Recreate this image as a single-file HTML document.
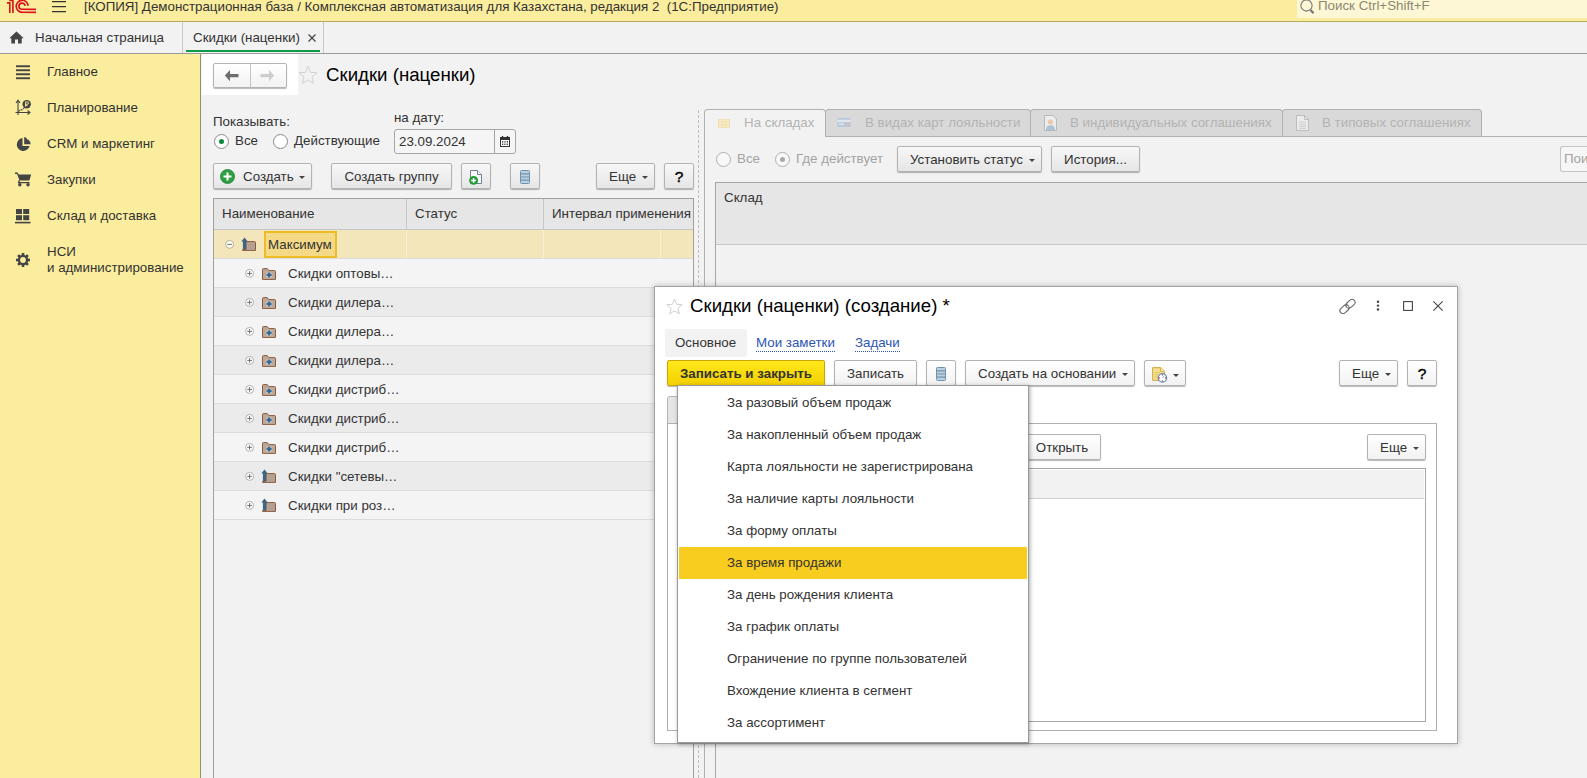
<!DOCTYPE html>
<html lang="ru">
<head>
<meta charset="utf-8">
<title>Скидки (наценки)</title>
<style>
*{box-sizing:border-box;margin:0;padding:0}
html,body{width:1587px;height:778px;overflow:hidden;background:#f2f2f2;font-family:"Liberation Sans",sans-serif;font-size:13.33px;color:#333}
.abs{position:absolute}
#top{left:0;top:0;width:1587px;height:22px;background:#fbed9e;border-bottom:1px solid #b9a85f}
#top .ttl{left:84px;top:-3px;font-size:13.33px;line-height:20px;color:#333;white-space:nowrap}
#srch{left:1297px;top:0;width:290px;height:18px;background:#fef7d6}
#srch span{left:21px;top:-4px;font-size:13.33px;line-height:20px;color:#8c8872;white-space:nowrap}
#tabs{left:0;top:22px;width:1587px;height:32px;background:#f2f2f2;border-bottom:1px solid #9a9a9a}
#tabs .t{top:0;height:31px;line-height:31px;font-size:13.33px;color:#333;white-space:nowrap}
#side{left:0;top:54px;width:201px;height:724px;background:#fbed9e;border-right:1px solid #979060}
#side .it{left:47px;font-size:13.33px;line-height:16px;color:#333;white-space:nowrap}
.btn{position:absolute;height:26px;border:1px solid #b3b3b3;border-radius:2px;background:linear-gradient(rgba(255,255,255,.4),rgba(0,0,0,.05));box-shadow:0 1px 1px rgba(0,0,0,.28);font-size:13.33px;line-height:26px;color:#333;text-align:center;white-space:nowrap}
.car{position:absolute;right:6px;top:12px;width:0;height:0;border-left:3px solid transparent;border-right:3px solid transparent;border-top:3px solid #444}
.btn.dd{text-align:left;padding-left:12px}
.radio{position:absolute;width:15px;height:15px;border:1px solid #8a8a8a;border-radius:50%;background:#fff}
.radio.on::after{content:"";position:absolute;left:4px;top:4px;width:5px;height:5px;border-radius:50%;background:#0b8a3c}
.lbl{position:absolute;font-size:13.33px;line-height:16px;white-space:nowrap;color:#333}

.th{position:absolute;top:0;height:30px;line-height:29px;padding-left:8px;font-size:13.33px;color:#333;border-right:1px solid #c6c6c6;white-space:nowrap;overflow:hidden}
.row{position:absolute;left:0;width:479px;height:29px;border-bottom:1px solid #dcdcdc}
.row .nm{position:absolute;left:74px;top:0;line-height:30px;font-size:13.33px;color:#333;white-space:nowrap}
.row .pm{position:absolute;left:31px;top:9px}
.row .fi{position:absolute;left:48px;top:9px}

.rt{position:absolute;top:55px;height:27px;border:1px solid #b0b0b0;border-bottom:none;border-radius:4px 4px 0 0;background:#d9d9d9;font-size:13.33px;line-height:26px;color:#b3b3b3;white-space:nowrap}
.rt span{position:absolute;top:0}
.rt svg{position:absolute}

#dlg{left:654px;top:286px;width:804px;height:458px;background:#fff;border:1px solid #a3a3a3;box-shadow:0 0 6px rgba(0,0,0,.25)}
#menu{left:677px;top:385px;width:352px;height:358px;background:#fff;border:1px solid #9a9a9a;box-shadow:1px 1px 4px rgba(0,0,0,.35)}
#menu div{position:absolute;left:1px;width:348px;height:32px;padding-left:48px;font-size:13.33px;line-height:32px;color:#333;white-space:nowrap}
a.lk{position:absolute;color:#2d55b3;font-size:13.33px;line-height:16px;white-space:nowrap;border-bottom:1px dotted #2d55b3;text-decoration:none}
</style>
</head>
<body>
<!-- TOP BAR -->
<div id="top" class="abs">
  <svg class="abs" style="left:0;top:0" width="40" height="15" viewBox="0 0 40 15">
    <g fill="none" stroke="#d9141c" stroke-width="1.65">
      <path d="M7 2.9H9.8V12.9"/>
      <path d="M9.3 0.4H12.9V12.9"/>
      <path d="M28.2 5.9A6 6 0 1 0 22.3 12.3H36"/>
      <path d="M25.1 5.9A3.1 3.1 0 1 0 22 9.3H36"/>
    </g>
  </svg>
  <svg class="abs" style="left:52px;top:0" width="14" height="13" viewBox="0 0 14 13"><g stroke="#333" stroke-width="1.3"><path d="M0 1.7H14M0 6.7H14M0 11.7H14"/></g></svg>
  <div class="abs ttl">[КОПИЯ] Демонстрационная база / Комплексная автоматизация для Казахстана, редакция 2&nbsp; (1С:Предприятие)</div>
  <div id="srch" class="abs">
    <svg class="abs" style="left:2px;top:-1px" width="17" height="16" viewBox="0 0 17 16"><circle cx="7.5" cy="6.5" r="5.6" fill="none" stroke="#777" stroke-width="1.1"/><path d="M11.5 11L14.5 14.3" stroke="#777" stroke-width="2.2"/></svg>
    <span class="abs">Поиск Ctrl+Shift+F</span>
  </div>
</div>

<!-- TAB BAR -->
<div id="tabs" class="abs">
  <svg class="abs" style="left:9px;top:9px" width="15" height="13" viewBox="0 0 15 13"><path d="M7.5 0.5L0.3 7.2H2.3V12.6H6V8.4H9V12.6H12.7V7.2H14.7Z" fill="#444"/></svg>
  <div class="abs t" style="left:35px">Начальная страница</div>
  <div class="abs" style="left:182px;top:0;width:1px;height:31px;background:#c8c8c8"></div>
  <div class="abs t" style="left:193px">Скидки (наценки)</div>
  <svg class="abs" style="left:307px;top:11px" width="10" height="10" viewBox="0 0 10 10"><path d="M1.5 1.5L8.5 8.5M8.5 1.5L1.5 8.5" stroke="#444" stroke-width="1.2"/></svg>
  <div class="abs" style="left:186px;top:28px;width:134px;height:2px;background:#0f9a4a"></div>
  <div class="abs" style="left:323px;top:0;width:1px;height:31px;background:#c8c8c8"></div>
</div>

<!-- SIDEBAR -->
<div id="side" class="abs">
  <svg class="abs" style="left:16px;top:11px" width="14" height="15" viewBox="0 0 14 15"><g fill="#444"><rect y="0.3" width="14" height="1.9"/><rect y="4.3" width="14" height="1.9"/><rect y="8.3" width="14" height="1.9"/><rect y="12.3" width="14" height="1.9"/></g></svg>
  <svg class="abs" style="left:15px;top:45px" width="17" height="18" viewBox="0 0 17 18"><g fill="none" stroke="#444" stroke-width="1.1"><path d="M3 1.5V16M0.5 13.5H14.5"/><path d="M1 4L3 1.2L5 4M12.5 11.5L15 13.5L12.5 15.5" /><path d="M3.5 12.5L5.5 10.5L7 11L9 9" stroke-dasharray="2 1"/></g><circle cx="11.7" cy="5.2" r="4.2" fill="#444"/><path d="M10.6 7.6V2.9H12.3A1.2 1.2 0 0 1 12.3 5.3H10M10 6.4H12.6" stroke="#fbed9e" stroke-width="0.9" fill="none"/></svg>
  <svg class="abs" style="left:16px;top:83px" width="15" height="15" viewBox="0 0 15 15"><path d="M6.5 1A6.5 6.5 0 1 0 13.6 9H6.5Z" fill="#444"/><path d="M8.2 0V7.2H14.6A7 7 0 0 0 12.2 2.6H10.8V1.2A7 7 0 0 0 8.2 0Z" fill="#444"/></svg>
  <svg class="abs" style="left:15px;top:118px" width="17" height="15" viewBox="0 0 17 15"><path d="M0 0.6H2.6L3.6 2.5H16.2L14.4 8.6H4.6L2 1.9H0Z" fill="#444"/><path d="M4.4 8.2L3.6 10.6H14.6" stroke="#444" stroke-width="1.3" fill="none"/><circle cx="4.8" cy="12.8" r="1.7" fill="#444"/><circle cx="13" cy="12.8" r="1.7" fill="#444"/></svg>
  <svg class="abs" style="left:15px;top:155px" width="16" height="15" viewBox="0 0 16 15"><g fill="#444"><rect x="1" y="0" width="6" height="5"/><rect x="8.2" y="0" width="6" height="5"/><rect x="1" y="6.2" width="6" height="5"/><rect x="8.2" y="6.2" width="6" height="5"/><rect x="0" y="12.8" width="15.5" height="1.6"/></g></svg>
  <svg class="abs" style="left:16px;top:199px" width="14" height="14" viewBox="0 0 14 14"><g transform="translate(7 7)"><circle r="4.1" fill="none" stroke="#444" stroke-width="2.4"/><g fill="#444"><rect x="-1.3" y="-7" width="2.6" height="3"/><rect x="-1.3" y="4" width="2.6" height="3"/><rect x="-7" y="-1.3" width="3" height="2.6"/><rect x="4" y="-1.3" width="3" height="2.6"/><g transform="rotate(45)"><rect x="-1.3" y="-7" width="2.6" height="3"/><rect x="-1.3" y="4" width="2.6" height="3"/><rect x="-7" y="-1.3" width="3" height="2.6"/><rect x="4" y="-1.3" width="3" height="2.6"/></g></g></g></svg>
  <div class="abs it" style="top:10px">Главное</div>
  <div class="abs it" style="top:46px">Планирование</div>
  <div class="abs it" style="top:82px">CRM и маркетинг</div>
  <div class="abs it" style="top:118px">Закупки</div>
  <div class="abs it" style="top:154px">Склад и доставка</div>
  <div class="abs it" style="top:190px">НСИ<br>и администрирование</div>
</div>

<!-- MAIN LEFT PANEL -->
<div id="main" class="abs" style="left:201px;top:54px;width:1386px;height:724px">

  <!-- white nav backing -->
  <div class="abs" style="left:1px;top:0;width:96px;height:41px;background:#fff"></div>
  <div class="btn" style="left:12px;top:9px;width:74px;height:25px"></div>
  <div class="abs" style="left:49px;top:10px;width:1px;height:23px;background:#c4c4c4"></div>
  <svg class="abs" style="left:23px;top:15px" width="15" height="13" viewBox="0 0 15 13"><path d="M6 1L0.8 6.6L6 12.2V8.2H14.5V5H6Z" fill="#6e6e6e"/></svg>
  <svg class="abs" style="left:59px;top:15px" width="15" height="13" viewBox="0 0 15 13"><path d="M9 1L14.2 6.6L9 12.2V8.2H0.5V5H9Z" fill="#cdcdcd"/></svg>
  <svg class="abs" style="left:97px;top:11px" width="20" height="20" viewBox="0 0 20 20"><path d="M10 1.2L12.5 7.4L19 7.8L14 12L15.7 18.5L10 14.9L4.3 18.5L6 12L1 7.8L7.5 7.4Z" fill="none" stroke="#d2d2d2" stroke-width="1"/></svg>
  <div class="abs" style="left:125px;top:9px;font-size:18.67px;line-height:24px;color:#000;white-space:nowrap">Скидки (наценки)</div>

  <div class="lbl" style="left:12px;top:60px">Показывать:</div>
  <div class="lbl" style="left:193px;top:56px">на дату:</div>
  <div class="radio on" style="left:13px;top:80px"></div>
  <div class="lbl" style="left:34px;top:79px">Все</div>
  <div class="radio" style="left:72px;top:80px"></div>
  <div class="lbl" style="left:93px;top:79px">Действующие</div>
  <div class="abs" style="left:193px;top:75px;width:122px;height:25px;border:1px solid #a6a6a6;border-radius:3px;background:#f5f5f5"></div>
  <div class="abs" style="left:293px;top:76px;width:1px;height:23px;background:#a6a6a6"></div>
  <div class="lbl" style="left:198px;top:80px">23.09.2024</div>
  <svg class="abs" style="left:299px;top:82px" width="10" height="11" viewBox="0 0 10 11"><rect x="0.5" y="1.5" width="9" height="9" fill="#fff" stroke="#333" stroke-width="1"/><rect x="0" y="1" width="10" height="3" fill="#333"/><rect x="1.8" y="0" width="1.4" height="2" fill="#333"/><rect x="6.8" y="0" width="1.4" height="2" fill="#333"/><g fill="#333"><rect x="2" y="5.2" width="1.3" height="1.3"/><rect x="4.35" y="5.2" width="1.3" height="1.3"/><rect x="6.7" y="5.2" width="1.3" height="1.3"/><rect x="2" y="7.6" width="1.3" height="1.3"/><rect x="4.35" y="7.6" width="1.3" height="1.3"/><rect x="6.7" y="7.6" width="1.3" height="1.3"/></g></svg>

  <div class="btn dd" style="left:12px;top:109px;width:99px;padding-left:29px">Создать<span class="car"></span></div>
  <svg class="abs" style="left:19px;top:115px" width="15" height="15" viewBox="0 0 15 15"><circle cx="7.5" cy="7.5" r="7" fill="#2ea043" stroke="#1c7c31" stroke-width="0.8"/><path d="M3.5 7.5H11.5M7.5 3.5V11.5" stroke="#fff" stroke-width="2"/></svg>
  <div class="btn" style="left:130px;top:109px;width:121px">Создать группу</div>
  <div class="btn" style="left:260px;top:109px;width:30px"></div>
  <svg class="abs" style="left:268px;top:116px" width="14" height="15" viewBox="0 0 14 15"><path d="M1.5 0.5H8.5L12.5 4.5V13.5H1.5Z" fill="#f7f7f7" stroke="#70819b" stroke-width="1"/><path d="M8.5 0.5V4.5H12.5" fill="#fff" stroke="#70819b" stroke-width="1"/><circle cx="4.6" cy="10.4" r="4.4" fill="#219a33"/><path d="M2.1 10.4H7.1M4.6 7.9V12.9" stroke="#fff" stroke-width="1.5"/></svg>
  <div class="btn" style="left:309px;top:109px;width:30px"></div>
  <svg class="abs" style="left:319px;top:116px" width="10" height="14" viewBox="0 0 10 14"><rect x="0.5" y="0.5" width="9" height="13" rx="1" fill="#bdd0de" stroke="#7092b0" stroke-width="1"/><path d="M1 3.8H9M1 7H9M1 10.2H9" stroke="#7092b0" stroke-width="1.2"/></svg>
  <div class="btn dd" style="left:395px;top:109px;width:59px">Еще<span class="car"></span></div>
  <div class="btn" style="left:463px;top:109px;width:30px;color:#000;font-size:15.5px;-webkit-text-stroke:0.4px #000">?</div>

  <!-- table -->
  <div class="abs" style="left:12px;top:144px;width:481px;height:580px;border:1px solid #a0a0a0;border-bottom:none;background:#f2f2f2;overflow:hidden">
    <div class="abs" style="left:0;top:0;width:479px;height:31px;background:#e6e6e6;border-bottom:1px solid #c6c6c6">
      <div class="th" style="left:0;width:193px">Наименование</div>
      <div class="th" style="left:193px;width:137px">Статус</div>
      <div class="th" style="left:330px;width:149px;border-right:none">Интервал применения</div>
    </div>
    <div class="row" style="top:31px;background:#f3e6ba">
      <div class="abs" style="left:192px;top:0;width:1px;height:28px;background:#f7efd6"></div>
      <div class="abs" style="left:329px;top:0;width:1px;height:28px;background:#f7efd6"></div>
      <div class="abs" style="left:446px;top:0;width:1px;height:28px;background:#f7efd6"></div>
      <svg class="pm" style="left:11px;top:9px" width="10" height="10" viewBox="0 0 10 10"><circle cx="4.6" cy="5.4" r="4" fill="#fbf8ec" stroke="#b3ad99" stroke-width="0.9"/><path d="M2.3 5.4H6.9" stroke="#666" stroke-width="0.9"/></svg>
      <svg class="fi" style="left:27px;top:7px" width="15" height="14" viewBox="0 0 15 14"><path d="M5 4.6H13.6Q14.5 4.6 14.5 5.5V13.4H1.6V12.4H5Z" fill="#b9a594" stroke="#8b5a3c" stroke-width="1"/><rect x="6.6" y="6.2" width="7" height="6.4" fill="#b3a090"/><path d="M0.3 4.4L3.5 0.4L6.7 4.4H5.2V12.2H1.9V4.4Z" fill="#3d6685"/></svg>
      <div class="abs" style="left:50px;top:1px;width:73px;height:27px;background:#f4da86;border:2px solid #ecbd26"></div>
      <div class="nm" style="left:54px">Максимум</div>
    </div>
<div class="row" style="top:60px;background:#f4f4f4"><svg class="pm" width="10" height="10" viewBox="0 0 10 10"><circle cx="4.6" cy="5.4" r="4" fill="#fdfdfd" stroke="#a9a9a9" stroke-width="0.9"/><path d="M2.2 5.4H7M4.6 3V7.8" stroke="#666" stroke-width="0.9"/></svg><svg class="fi" width="15" height="13" viewBox="0 0 15 13"><path d="M0.5 1.5Q0.5 0.6 1.4 0.6H5.2L7 2.6H12.6Q13.5 2.6 13.5 3.5V11.4H0.5Z" fill="#bba796" stroke="#8b5a3c" stroke-width="1"/><rect x="1" y="3.6" width="12" height="7.3" fill="#bda998"/><circle cx="7.1" cy="6.9" r="3.1" fill="#d9cdc2" opacity=".75"/><path d="M7.1 4.4V9.4M4.6 6.9H9.6" stroke="#33689a" stroke-width="2.1"/></svg><div class="nm">Скидки оптовы…</div></div>
<div class="row" style="top:89px;background:#ebebeb"><svg class="pm" width="10" height="10" viewBox="0 0 10 10"><circle cx="4.6" cy="5.4" r="4" fill="#fdfdfd" stroke="#a9a9a9" stroke-width="0.9"/><path d="M2.2 5.4H7M4.6 3V7.8" stroke="#666" stroke-width="0.9"/></svg><svg class="fi" width="15" height="13" viewBox="0 0 15 13"><path d="M0.5 1.5Q0.5 0.6 1.4 0.6H5.2L7 2.6H12.6Q13.5 2.6 13.5 3.5V11.4H0.5Z" fill="#bba796" stroke="#8b5a3c" stroke-width="1"/><rect x="1" y="3.6" width="12" height="7.3" fill="#bda998"/><circle cx="7.1" cy="6.9" r="3.1" fill="#d9cdc2" opacity=".75"/><path d="M7.1 4.4V9.4M4.6 6.9H9.6" stroke="#33689a" stroke-width="2.1"/></svg><div class="nm">Скидки дилера…</div></div>
<div class="row" style="top:118px;background:#f4f4f4"><svg class="pm" width="10" height="10" viewBox="0 0 10 10"><circle cx="4.6" cy="5.4" r="4" fill="#fdfdfd" stroke="#a9a9a9" stroke-width="0.9"/><path d="M2.2 5.4H7M4.6 3V7.8" stroke="#666" stroke-width="0.9"/></svg><svg class="fi" width="15" height="13" viewBox="0 0 15 13"><path d="M0.5 1.5Q0.5 0.6 1.4 0.6H5.2L7 2.6H12.6Q13.5 2.6 13.5 3.5V11.4H0.5Z" fill="#bba796" stroke="#8b5a3c" stroke-width="1"/><rect x="1" y="3.6" width="12" height="7.3" fill="#bda998"/><circle cx="7.1" cy="6.9" r="3.1" fill="#d9cdc2" opacity=".75"/><path d="M7.1 4.4V9.4M4.6 6.9H9.6" stroke="#33689a" stroke-width="2.1"/></svg><div class="nm">Скидки дилера…</div></div>
<div class="row" style="top:147px;background:#ebebeb"><svg class="pm" width="10" height="10" viewBox="0 0 10 10"><circle cx="4.6" cy="5.4" r="4" fill="#fdfdfd" stroke="#a9a9a9" stroke-width="0.9"/><path d="M2.2 5.4H7M4.6 3V7.8" stroke="#666" stroke-width="0.9"/></svg><svg class="fi" width="15" height="13" viewBox="0 0 15 13"><path d="M0.5 1.5Q0.5 0.6 1.4 0.6H5.2L7 2.6H12.6Q13.5 2.6 13.5 3.5V11.4H0.5Z" fill="#bba796" stroke="#8b5a3c" stroke-width="1"/><rect x="1" y="3.6" width="12" height="7.3" fill="#bda998"/><circle cx="7.1" cy="6.9" r="3.1" fill="#d9cdc2" opacity=".75"/><path d="M7.1 4.4V9.4M4.6 6.9H9.6" stroke="#33689a" stroke-width="2.1"/></svg><div class="nm">Скидки дилера…</div></div>
<div class="row" style="top:176px;background:#f4f4f4"><svg class="pm" width="10" height="10" viewBox="0 0 10 10"><circle cx="4.6" cy="5.4" r="4" fill="#fdfdfd" stroke="#a9a9a9" stroke-width="0.9"/><path d="M2.2 5.4H7M4.6 3V7.8" stroke="#666" stroke-width="0.9"/></svg><svg class="fi" width="15" height="13" viewBox="0 0 15 13"><path d="M0.5 1.5Q0.5 0.6 1.4 0.6H5.2L7 2.6H12.6Q13.5 2.6 13.5 3.5V11.4H0.5Z" fill="#bba796" stroke="#8b5a3c" stroke-width="1"/><rect x="1" y="3.6" width="12" height="7.3" fill="#bda998"/><circle cx="7.1" cy="6.9" r="3.1" fill="#d9cdc2" opacity=".75"/><path d="M7.1 4.4V9.4M4.6 6.9H9.6" stroke="#33689a" stroke-width="2.1"/></svg><div class="nm">Скидки дистриб…</div></div>
<div class="row" style="top:205px;background:#ebebeb"><svg class="pm" width="10" height="10" viewBox="0 0 10 10"><circle cx="4.6" cy="5.4" r="4" fill="#fdfdfd" stroke="#a9a9a9" stroke-width="0.9"/><path d="M2.2 5.4H7M4.6 3V7.8" stroke="#666" stroke-width="0.9"/></svg><svg class="fi" width="15" height="13" viewBox="0 0 15 13"><path d="M0.5 1.5Q0.5 0.6 1.4 0.6H5.2L7 2.6H12.6Q13.5 2.6 13.5 3.5V11.4H0.5Z" fill="#bba796" stroke="#8b5a3c" stroke-width="1"/><rect x="1" y="3.6" width="12" height="7.3" fill="#bda998"/><circle cx="7.1" cy="6.9" r="3.1" fill="#d9cdc2" opacity=".75"/><path d="M7.1 4.4V9.4M4.6 6.9H9.6" stroke="#33689a" stroke-width="2.1"/></svg><div class="nm">Скидки дистриб…</div></div>
<div class="row" style="top:234px;background:#f4f4f4"><svg class="pm" width="10" height="10" viewBox="0 0 10 10"><circle cx="4.6" cy="5.4" r="4" fill="#fdfdfd" stroke="#a9a9a9" stroke-width="0.9"/><path d="M2.2 5.4H7M4.6 3V7.8" stroke="#666" stroke-width="0.9"/></svg><svg class="fi" width="15" height="13" viewBox="0 0 15 13"><path d="M0.5 1.5Q0.5 0.6 1.4 0.6H5.2L7 2.6H12.6Q13.5 2.6 13.5 3.5V11.4H0.5Z" fill="#bba796" stroke="#8b5a3c" stroke-width="1"/><rect x="1" y="3.6" width="12" height="7.3" fill="#bda998"/><circle cx="7.1" cy="6.9" r="3.1" fill="#d9cdc2" opacity=".75"/><path d="M7.1 4.4V9.4M4.6 6.9H9.6" stroke="#33689a" stroke-width="2.1"/></svg><div class="nm">Скидки дистриб…</div></div>
<div class="row" style="top:263px;background:#ebebeb"><svg class="pm" width="10" height="10" viewBox="0 0 10 10"><circle cx="4.6" cy="5.4" r="4" fill="#fdfdfd" stroke="#a9a9a9" stroke-width="0.9"/><path d="M2.2 5.4H7M4.6 3V7.8" stroke="#666" stroke-width="0.9"/></svg><svg class="fi" style="left:47px;top:7px" width="15" height="14" viewBox="0 0 15 14"><path d="M5 4.6H13.6Q14.5 4.6 14.5 5.5V13.4H1.6V12.4H5Z" fill="#b9a594" stroke="#8b5a3c" stroke-width="1"/><rect x="6.6" y="6.2" width="7" height="6.4" fill="#b3a090"/><path d="M0.3 4.4L3.5 0.4L6.7 4.4H5.2V12.2H1.9V4.4Z" fill="#3d6685"/></svg><div class="nm">Скидки "сетевы…</div></div>
<div class="row" style="top:292px;background:#f4f4f4"><svg class="pm" width="10" height="10" viewBox="0 0 10 10"><circle cx="4.6" cy="5.4" r="4" fill="#fdfdfd" stroke="#a9a9a9" stroke-width="0.9"/><path d="M2.2 5.4H7M4.6 3V7.8" stroke="#666" stroke-width="0.9"/></svg><svg class="fi" style="left:47px;top:7px" width="15" height="14" viewBox="0 0 15 14"><path d="M5 4.6H13.6Q14.5 4.6 14.5 5.5V13.4H1.6V12.4H5Z" fill="#b9a594" stroke="#8b5a3c" stroke-width="1"/><rect x="6.6" y="6.2" width="7" height="6.4" fill="#b3a090"/><path d="M0.3 4.4L3.5 0.4L6.7 4.4H5.2V12.2H1.9V4.4Z" fill="#3d6685"/></svg><div class="nm">Скидки при роз…</div></div>

  </div>

  <!-- RIGHT PANEL -->
  <div class="abs" style="left:503px;top:82px;width:900px;height:660px;border:1px solid #b0b0b0;border-right:none;border-bottom:none;background:#f2f2f2"></div>
  <div class="rt" style="left:503px;width:122px;background:#f2f2f2;height:28px"><svg style="left:13px;top:9px" width="12" height="9" viewBox="0 0 13 10"><rect x="0.5" y="0.5" width="12" height="9" fill="#f8ecc8" stroke="#efdfae"/><path d="M0.5 3.5H12.5M0.5 6.5H12.5M4.5 0.5V9.5M8.5 0.5V9.5" stroke="#efdfae" stroke-width="1"/></svg><span style="left:39px">На складах</span></div>
  <div class="rt" style="left:624px;width:206px"><svg style="left:11px;top:8px" width="14" height="9" viewBox="0 0 15 10"><rect x="0" y="0" width="15" height="10" rx="1" fill="#b9c9dc"/><rect x="0" y="2" width="15" height="2.5" fill="#dfe6ee"/><rect x="10" y="6" width="3.5" height="2.5" fill="#e7b7a0"/><rect x="1.5" y="6" width="6" height="1.5" fill="#dfe6ee"/></svg><span style="left:39px">В видах карт лояльности</span></div>
  <div class="rt" style="left:829px;width:253px"><svg style="left:13px;top:5px" width="13" height="16" viewBox="0 0 13 16"><path d="M0.5 0.5H9L12.5 4V15.5H0.5Z" fill="#ececec" stroke="#b9b9b9"/><circle cx="6.5" cy="7" r="2.6" fill="#e8c9ae"/><path d="M2 15C2 11.5 4 10.3 6.5 10.3S11 11.5 11 15Z" fill="#a9c3d9"/></svg><span style="left:39px">В индивидуальных соглашениях</span></div>
  <div class="rt" style="left:1081px;width:200px"><svg style="left:13px;top:5px" width="13" height="16" viewBox="0 0 13 16"><path d="M0.5 0.5H8.5L12.5 4.5V15.5H0.5Z" fill="#ececec" stroke="#bdbdbd"/><path d="M8.5 0.5V4.5H12.5" fill="none" stroke="#bdbdbd"/><path d="M3 7H10M3 9.2H10M3 11.4H10M3 13.4H10" stroke="#c9c9c9" stroke-width="0.9"/></svg><span style="left:39px">В типовых соглашениях</span></div>

  <div class="radio" style="left:515px;top:98px;border-color:#b0b0b0;background:#f8f8f8"></div>
  <div class="lbl" style="left:536px;top:97px;color:#a3a3a3">Все</div>
  <div class="radio" style="left:574px;top:98px;border-color:#b0b0b0;background:#f8f8f8"><div class="abs" style="left:4px;top:4px;width:5px;height:5px;border-radius:50%;background:#a9a9a9"></div></div>
  <div class="lbl" style="left:595px;top:97px;color:#a3a3a3">Где действует</div>
  <div class="btn dd" style="left:696px;top:92px;width:145px">Установить статус<span class="car"></span></div>
  <div class="btn" style="left:850px;top:92px;width:89px">История...</div>
  <div class="abs" style="left:1359px;top:92px;width:40px;height:26px;border:1px solid #c4c4c4;border-right:none;border-radius:3px 0 0 3px;background:#f6f6f6"></div>
  <div class="lbl" style="left:1363px;top:97px;color:#a3a3a3">Пои</div>

  <div class="abs" style="left:514px;top:128px;width:880px;height:600px;border:1px solid #a6a6a6;border-right:none;border-bottom:none;background:#f2f2f2">
    <div class="abs" style="left:0;top:0;width:879px;height:62px;background:#e6e6e6;border-bottom:1px solid #c6c6c6"></div>
    <div class="lbl" style="left:8px;top:7px">Склад</div>
  </div>
  <!-- splitter -->
  <div class="abs" style="left:497px;top:56px;width:0;height:668px;border-left:1px dashed #bdbdbd"></div>
</div>


<!-- DIALOG -->
<div id="dlg" class="abs"><div class="abs" style="left:0;top:1px;width:0;height:0">
  <svg class="abs" style="left:11px;top:10px" width="17" height="17" viewBox="0 0 17 17"><path d="M8.5 1L10.6 6.3L16.2 6.7L11.9 10.3L13.3 15.8L8.5 12.8L3.7 15.8L5.1 10.3L0.8 6.7L6.4 6.3Z" fill="none" stroke="#cfcfcf" stroke-width="1"/></svg>
  <div class="abs" style="left:35px;top:6px;font-size:18.67px;line-height:24px;color:#000;white-space:nowrap">Скидки (наценки) (создание) *</div>
  <svg class="abs" style="left:684px;top:10px" width="17" height="17" viewBox="0 0 17 17"><g fill="none" stroke="#666" stroke-width="1.05" transform="rotate(-42 8.5 8.5)"><rect x="-0.6" y="5.5" width="10.2" height="6" rx="3"/><rect x="7.4" y="5.5" width="10.2" height="6" rx="3"/></g></svg>
  <svg class="abs" style="left:721px;top:12px" width="4" height="11" viewBox="0 0 4 11"><g fill="#444"><circle cx="2" cy="1.7" r="1.2"/><circle cx="2" cy="5.6" r="1.2"/><circle cx="2" cy="9.5" r="1.2"/></g></svg>
  <svg class="abs" style="left:748px;top:13px" width="10" height="10" viewBox="0 0 10 10"><rect x="0.6" y="0.6" width="8.8" height="8.8" fill="none" stroke="#444" stroke-width="1.1"/></svg>
  <svg class="abs" style="left:778px;top:13px" width="10" height="10" viewBox="0 0 10 10"><path d="M0.4 0.4L9.6 9.6M9.6 0.4L0.4 9.6" stroke="#444" stroke-width="1.1"/></svg>

  <div class="abs" style="left:10px;top:41px;width:82px;height:28px;background:#f2f2f2;border-radius:3px"></div>
  <div class="lbl" style="left:20px;top:47px">Основное</div>
  <a class="lk" style="left:101px;top:47px">Мои заметки</a>
  <a class="lk" style="left:200px;top:47px">Задачи</a>

  <div class="btn" style="left:12px;top:72px;width:158px;background:linear-gradient(#ffe81a,#f4d000);border-color:#c9a700;font-weight:bold;color:#333">Записать и закрыть</div>
  <div class="btn" style="left:179px;top:72px;width:83px">Записать</div>
  <div class="btn" style="left:271px;top:72px;width:30px"></div>
  <svg class="abs" style="left:281px;top:79px" width="10" height="14" viewBox="0 0 10 14"><rect x="0.5" y="0.5" width="9" height="13" rx="1" fill="#bdd0de" stroke="#7092b0" stroke-width="1"/><path d="M1 3.8H9M1 7H9M1 10.2H9" stroke="#7092b0" stroke-width="1.2"/></svg>
  <div class="btn dd" style="left:310px;top:72px;width:170px">Создать на основании<span class="car"></span></div>
  <div class="btn" style="left:489px;top:72px;width:42px"></div>
  <svg class="abs" style="left:497px;top:79px" width="16" height="17" viewBox="0 0 16 17"><path d="M1.3 0.6H8.4L12.4 4.4V13.4H1.3Q0.6 13.4 0.6 12.7V1.3Q0.6 0.6 1.3 0.6Z" fill="#f6e08f" stroke="#d3b04a" stroke-width="1.1"/><path d="M8.4 0.6V4.4H12.4" fill="#fbeeb8" stroke="#d3b04a" stroke-width="1"/><path d="M2.6 5.6H7.4M2.6 7.8H6M2.6 10H5" stroke="#d9bd62" stroke-width="0.9"/><circle cx="10.4" cy="10.9" r="4.2" fill="#fff" stroke="#5f90c0" stroke-width="1.3"/><g fill="#e21b1b"><circle cx="10.4" cy="7.9" r="0.65"/><circle cx="10.4" cy="13.9" r="0.65"/><circle cx="7.4" cy="10.9" r="0.65"/><circle cx="13.4" cy="10.9" r="0.65"/></g><path d="M10.4 10.9L12 8.8" stroke="#8aa6d6" stroke-width="1"/></svg>
  <span class="car" style="left:518px;top:86px;right:auto"></span>
  <div class="btn dd" style="left:684px;top:72px;width:59px">Еще<span class="car"></span></div>
  <div class="btn" style="left:752px;top:72px;width:30px;color:#000;font-size:15.5px;-webkit-text-stroke:0.4px #000">?</div>

  <!-- tab header + page -->
  <div class="abs" style="left:12px;top:108px;width:110px;height:28px;background:#e5e5e5;border:1px solid #b5b5b5;border-radius:3px 3px 0 0"></div>
  <div class="abs" style="left:12px;top:135px;width:770px;height:308px;background:#fff;border:1px solid #b0b0b0"></div>
  <div class="btn" style="left:368px;top:146px;width:78px">Открыть</div>
  <div class="btn dd" style="left:712px;top:146px;width:59px">Еще<span class="car"></span></div>
  <div class="abs" style="left:23px;top:180px;width:748px;height:254px;background:#fff;border:1px solid #a6a6a6"></div>
  <div class="abs" style="left:24px;top:181px;width:746px;height:30px;background:#f2f2f2;border:1px solid #fff;border-bottom:1px solid #d0d0d0"></div>
</div></div>
<div id="menu" class="abs">
  <div style="top:1px">За разовый объем продаж</div>
  <div style="top:33px">За накопленный объем продаж</div>
  <div style="top:65px">Карта лояльности не зарегистрирована</div>
  <div style="top:97px">За наличие карты лояльности</div>
  <div style="top:129px">За форму оплаты</div>
  <div style="top:161px;background:#f9cc20">За время продажи</div>
  <div style="top:193px">За день рождения клиента</div>
  <div style="top:225px">За график оплаты</div>
  <div style="top:257px">Ограничение по группе пользователей</div>
  <div style="top:289px">Вхождение клиента в сегмент</div>
  <div style="top:321px">За ассортимент</div>
</div>
</body>
</html>
